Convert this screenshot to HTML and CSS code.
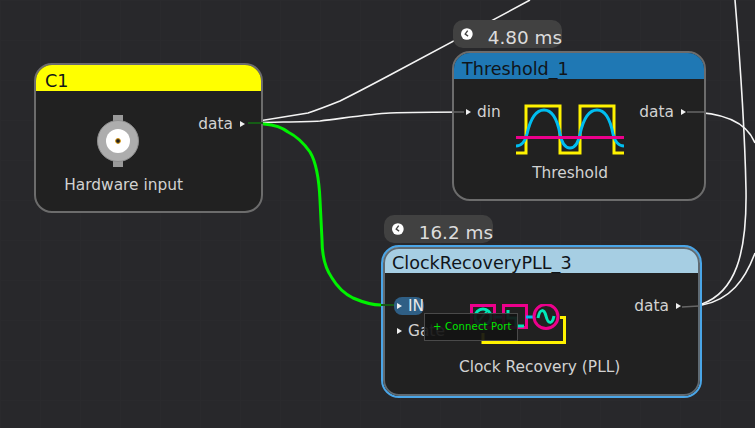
FILE: index.html
```html
<html lang="en">
<head>
    <title>Signal Flow</title>
    <link rel="stylesheet" href="styles.css">
</head>
<body>
<div class="canvas">
    <svg class="wires" width="755" height="428" viewBox="0 0 755 428">
        <path class="wire" d="M246 123 C270 119 290 116 308 113 C320 109 330 105 340 101 C360 91 375 83 390 75 C415 62 480 27 530 0"/>
        <path class="wire" d="M246 123 C270 122 300 122 320 121 C345 118 370 114 390 113 C415 112 440 112 470 112"/>
        <path class="wire-live" d="M246 123 L264 124 C275 125 283 128 288 132 C296 136 303 142 310 152 C316 162 319 178 320 200 L322 240 C322 255 325 268 332 278 C338 288 345 294 353 298 C360 301 370 305 381 305"/>
        <path class="wire" d="M686 112 C715 112 745 118 755 143"/>
        <path class="wire" d="M702 304 C735 292 747 255 746 190 C745 140 740 60 735 0"/>
        <path class="wire" d="M702 305 C730 300 745 280 755 253"/>
    </svg>

    <div class="timing timing-threshold">
        <svg class="clock" width="14" height="14" viewBox="0 0 14 14"><circle cx="7" cy="7" r="7" fill="#fff"/><path d="M8 3 L5 7 L8.5 9.5" fill="none" stroke="#444" stroke-width="1.6"/></svg>
        <span>4.80 ms</span>
    </div>
    <div class="timing timing-pll">
        <svg class="clock" width="14" height="14" viewBox="0 0 14 14"><circle cx="7" cy="7" r="7" fill="#fff"/><path d="M8 3 L5 7 L8.5 9.5" fill="none" stroke="#444" stroke-width="1.6"/></svg>
        <span>16.2 ms</span>
    </div>

    <div class="node node-input">
        <div class="node-title title-yellow">C1</div>
        <div class="node-body">
            <div class="node-main">
                <svg class="bnc" width="44" height="52" viewBox="0 0 44 52">
                    <rect x="17" y="0" width="10" height="7" fill="#9a9a9a"/>
                    <rect x="17" y="45" width="10" height="7" fill="#9a9a9a"/>
                    <circle cx="22" cy="26" r="20.5" fill="#adadad" stroke="#8e8e8e" stroke-width="1"/>
                    <circle cx="22" cy="26" r="12" fill="#fff"/>
                    <circle cx="22" cy="26" r="2.4" fill="#222" stroke="#d9960a" stroke-width="1"/>
                </svg>
                <div class="node-label">Hardware input</div>
            </div>
            <div class="port port-out">data <span class="arrow"></span></div>
        </div>
    </div>

    <div class="node node-threshold">
        <div class="node-title title-blue">Threshold_1</div>
        <div class="node-body">
            <div class="port port-in"><span class="arrow"></span> din</div>
            <div class="node-main">
                <svg class="block-icon" width="108" height="52" viewBox="0 0 108 52">
                    <path d="M0 49 H10 V2 H44 V49 H64 V2 H98 V49 H108" fill="none" stroke="#fff200" stroke-width="3"/>
                    <path d="M0 42 C6 42 9 38 11 30 C15 12 21 6 28 6 C35 6 41 14 44 30 C46 40 50 44 54 44 C58 44 62 40 64 30 C68 12 74 6 81 6 C88 6 94 14 97 30 C99 38 103 42 108 42" fill="none" stroke="#00bdf0" stroke-width="3"/>
                    <rect x="0" y="32" width="108" height="3" fill="#ec008c"/>
                </svg>
                <div class="node-label">Threshold</div>
            </div>
            <div class="port port-out">data <span class="arrow"></span></div>
        </div>
    </div>

    <div class="node node-pll">
        <div class="node-title title-pale">ClockRecoveryPLL_3</div>
        <div class="node-body">
            <div class="port-list">
                <div class="port port-in port-active"><span class="arrow"></span> IN</div>
                <div class="port port-in"><span class="arrow"></span> Gate</div>
            </div>
            <div class="node-main">
                <svg class="block-icon" width="100" height="44" viewBox="0 0 100 44">
                    <rect x="1.5" y="1.5" width="23" height="22" fill="none" stroke="#ec008c" stroke-width="3"/>
                    <circle cx="13" cy="13" r="8" fill="none" stroke="#00e8b8" stroke-width="3"/>
                    <path d="M9 17 L17 7" stroke="#00e8b8" stroke-width="2"/>
                    <path d="M24 13 H33" stroke="#00bdf0" stroke-width="3"/>
                    <rect x="33.5" y="1.5" width="23" height="22" fill="none" stroke="#ec008c" stroke-width="3"/>
                    <path d="M38 6 V14 H46 V22 H54" fill="none" stroke="#00e8b8" stroke-width="3"/>
                    <path d="M56 13 H63" stroke="#00bdf0" stroke-width="3"/>
                    <circle cx="76" cy="12.5" r="12" fill="none" stroke="#ec008c" stroke-width="3"/>
                    <path d="M68 14 C70 4 74 5 76 12 C78 20 82 21 84 12" fill="none" stroke="#00e8b8" stroke-width="3"/>
                    <path d="M90 13.5 H94.5 V38.5 H13 V29" fill="none" stroke="#fff200" stroke-width="3"/>
                </svg>
                <div class="node-label">Clock Recovery (PLL)</div>
            </div>
            <div class="port port-out">data <span class="arrow"></span></div>
        </div>
    </div>

    <svg class="wires" width="755" height="428" viewBox="0 0 755 428">
        <path class="stub-live" d="M248 123 H263"/>
        <path class="stub" d="M687 112 H705"/>
        <path class="stub" d="M682 307 L699 306"/>
        <path class="stub" d="M453 112 H464"/>
        <path class="stub-live" d="M381 305 H394"/>
    </svg>

    <div class="tooltip">+ Connect Port</div>
</div>
</body>
</html>
```

FILE: styles.css
```css
html, body {
    margin: 0;
    padding: 0;
    overflow: hidden;
}

body {
    width: 755px;
    height: 428px;
    background-color: #28282b;
    font-family: "DejaVu Sans", sans-serif;
    font-size: 15.4px;
    color: #d2d2d2;
}

.canvas {
    position: relative;
    width: 755px;
    height: 428px;
    background-image:
        linear-gradient(#2a2a2d 1px, transparent 1px),
        linear-gradient(90deg, #2a2a2d 1px, transparent 1px);
    background-size: 40px 40px;
}

.wires {
    position: absolute;
    left: 0;
    top: 0;
    pointer-events: none;
}

.wire {
    fill: none;
    stroke: #f4f4f4;
    stroke-width: 1.6;
}

.wire-live {
    fill: none;
    stroke: #00f200;
    stroke-width: 3;
}

.stub {
    fill: none;
    stroke: #666;
    stroke-width: 1.5;
}

.stub-live {
    fill: none;
    stroke: #155c15;
    stroke-width: 2;
}

.node {
    position: absolute;
    box-sizing: border-box;
    display: flex;
    flex-direction: column;
    background-color: #212121;
    border: 2px solid #6c6c6c;
    border-radius: 18px;
    overflow: hidden;
}

.node-input {
    left: 34px;
    top: 63px;
    width: 229px;
    height: 150px;
}

.node-threshold {
    left: 452px;
    top: 51px;
    width: 254px;
    height: 150px;
}

.node-pll {
    left: 381px;
    top: 245px;
    width: 321px;
    height: 153px;
    border-color: #4aa6e8;
}

.node-pll::after {
    content: "";
    position: absolute;
    left: 0;
    top: 0;
    right: 0;
    bottom: 0;
    border: 2px solid #5f6a72;
    border-radius: 16px;
}

.node-title {
    flex: none;
    height: 26px;
    padding-left: 8px;
    font-size: 17.6px;
    line-height: 32px;
    color: #10151a;
}

.node-input .node-title,
.node-pll .node-title {
    padding-left: 9px;
}

.title-yellow {
    background-color: #ffff00;
}

.title-blue {
    background-color: #1f78b4;
}

.title-pale {
    background-color: #a6cee3;
}

.node-body {
    flex: 1;
    display: flex;
    justify-content: space-between;
    align-items: flex-start;
}

.node-main {
    flex: 1;
    display: flex;
    flex-direction: column;
    align-items: center;
}

.node-label {
    height: 18px;
    line-height: 18px;
    white-space: nowrap;
}

.port {
    display: flex;
    align-items: center;
    gap: 7px;
    height: 18px;
    white-space: nowrap;
}

.port-in {
    gap: 6px;
}

.arrow {
    flex: none;
    width: 0;
    height: 0;
    border-left: 5px solid #f0f0f0;
    border-top: 3px solid transparent;
    border-bottom: 3px solid transparent;
}

.port-list {
    display: flex;
    flex-direction: column;
    gap: 7px;
    margin-top: 24px;
    margin-left: 14px;
}

.port-active {
    align-self: flex-start;
    background-color: #2f5f85;
    border-radius: 8px;
    padding: 0 0 0 3px;
    margin-left: -3px;
    color: #e8e8e8;
}

.node-input .node-main {
    order: -1;
    margin-top: 24px;
}

.node-input .bnc {
    margin-left: 2px;
    margin-bottom: 9px;
}

.node-input .node-label {
    margin-left: 13px;
}

.node-input .port-out {
    margin-top: 24px;
    margin-right: 16px;
}

.node-threshold .port-in {
    margin-top: 24px;
    margin-left: 12px;
}

.node-threshold .node-main {
    margin-top: 25px;
}

.node-threshold .block-icon {
    margin-bottom: 8px;
}

.node-threshold .port-out {
    margin-top: 24px;
    margin-right: 18px;
}

.node-pll .node-main {
    margin-top: 31px;
}

.node-pll .block-icon {
    align-self: flex-start;
    margin-left: 25px;
    margin-bottom: 10px;
}

.node-pll .port-out {
    margin-top: 24px;
    margin-right: 19px;
}

.timing {
    position: absolute;
    box-sizing: border-box;
    display: flex;
    align-items: flex-start;
    gap: 15px;
    height: 28px;
    padding: 7px 0 0 8px;
    background-color: #414141;
    border-radius: 10px;
    font-size: 18.4px;
    color: #dcdcdc;
    white-space: nowrap;
}

.timing span {
    line-height: 21px;
}

.timing-threshold {
    left: 453px;
    top: 20px;
    width: 109px;
}

.timing-pll {
    left: 384px;
    top: 215px;
    width: 109px;
}

.tooltip {
    position: absolute;
    left: 424px;
    top: 313px;
    box-sizing: border-box;
    width: 94px;
    height: 28px;
    padding-left: 8px;
    background-color: rgba(20, 20, 20, 0.92);
    border: 1px solid #4a4a4a;
    font-size: 10px;
    line-height: 26px;
    letter-spacing: 0.2px;
    color: #00e600;
    white-space: nowrap;
}
```
